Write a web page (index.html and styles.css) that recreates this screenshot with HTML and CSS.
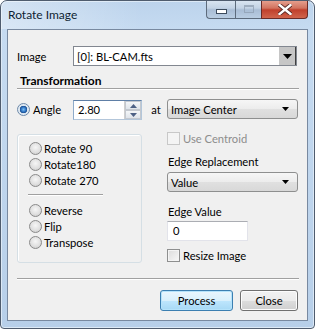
FILE: index.html
```html
<!DOCTYPE html>
<html lang="en">
  <head>
    <meta charset="utf-8">
    <title>Rotate Image</title>
    <link rel="stylesheet" href="styles.css">
  </head>
  <body>
    <div class="window">
      <div class="titlebar">
        <span class="title">Rotate Image</span>
        <div class="caption">
          <span class="cap cap-min"><span class="min-glyph"></span></span>
          <span class="cap cap-max"><span class="max-glyph"></span></span>
          <span class="cap cap-close">
            <svg width="14" height="11" viewBox="0 0 14 11">
              <path d="M1.5 1 L12.5 10 M12.5 1 L1.5 10" stroke="#5a2a26" stroke-width="4.2" stroke-linecap="square"/>
              <path d="M1.5 1 L12.5 10 M12.5 1 L1.5 10" stroke="#fff" stroke-width="2.4" stroke-linecap="square"/>
            </svg>
          </span>
        </div>
      </div>

      <div class="client">
        <div class="image-row">
          <span class="image-label">Image</span>
          <div class="edit-combo">
            <span class="edit-text">[0]: BL-CAM.fts</span>
            <span class="edit-drop">
              <svg width="9" height="5" viewBox="0 0 9 5"><polygon points="0,0 9,0 4.5,5" fill="#000"/></svg>
            </span>
          </div>
        </div>

        <div class="section-title">Transformation</div>

        <div class="transform">
          <div class="angle-row">
            <span class="radio checked"></span>
            <span class="angle-label">Angle</span>
            <div class="spin">
              <span class="spin-text">2.80</span>
              <span class="spin-btns">
                <span class="spin-btn">
                  <svg width="7" height="4" viewBox="0 0 7 4"><polygon points="0,4 7,4 3.5,0" fill="#4d6185"/></svg>
                </span>
                <span class="spin-btn">
                  <svg width="7" height="4" viewBox="0 0 7 4"><polygon points="0,0 7,0 3.5,4" fill="#4d6185"/></svg>
                </span>
              </span>
            </div>
          </div>
          <span class="at">at</span>
          <div class="combo">
            <span>Image Center</span>
            <svg width="7" height="4" viewBox="0 0 7 4"><polygon points="0,0 7,0 3.5,4" fill="#000"/></svg>
          </div>

          <div class="group">
            <div class="opt"><span class="radio"></span>Rotate 90</div>
            <div class="opt"><span class="radio"></span>Rotate180</div>
            <div class="opt"><span class="radio"></span>Rotate 270</div>
            <div class="group-sep"></div>
            <div class="opt"><span class="radio"></span>Reverse</div>
            <div class="opt"><span class="radio"></span>Flip</div>
            <div class="opt"><span class="radio"></span>Transpose</div>
          </div>

          <div class="right-col">
            <div class="check-row disabled"><span class="checkbox"></span>Use Centroid</div>
            <div class="field-label edge-rep">Edge Replacement</div>
            <div class="combo value-combo">
              <span>Value</span>
              <svg width="7" height="4" viewBox="0 0 7 4"><polygon points="0,0 7,0 3.5,4" fill="#000"/></svg>
            </div>
            <div class="field-label edge-val">Edge Value</div>
            <div class="textbox">0</div>
            <div class="check-row resize"><span class="checkbox"></span>Resize Image</div>
          </div>
        </div>

        <div class="bottom-sep"></div>

        <div class="buttons">
          <span class="btn btn-default">Process</span>
          <span class="btn btn-close">Close</span>
        </div>
      </div>
    </div>
  </body>
</html>
```

FILE: styles.css
```css
/* Win7 style dialog */

body {
  margin: 0;
  background-color: #ffffff;
  font-family: "Lato", "Noto Sans", sans-serif;
  font-size: 11.2px;
  color: #000000;
}

.window {
  width: 315px;
  height: 329px;
  box-sizing: border-box;
  border: 1px solid #4f5c6e;
  border-radius: 7px 7px 4px 4px;
  background: linear-gradient(to bottom, #bcd3ec 0px, #c6dbf1 30px, #b7cfe9 329px);
  box-shadow: inset 0 0 0 1px #dce9f6;
  overflow: hidden;
}

/* ----- title bar ----- */

.titlebar {
  height: 28px;
  display: flex;
  justify-content: space-between;
  background: linear-gradient(to right, rgba(255,255,255,0.35), rgba(255,255,255,0) 140px);
}

.title {
  padding: 6px 0 0 7px;
  font-size: 12px;
  color: #0f1f33;
}

.caption {
  display: flex;
  margin-right: 6px;
  height: 20px;
  margin-top: -1px;
}

.cap {
  display: flex;
  align-items: center;
  justify-content: center;
  height: 19px;
  box-sizing: border-box;
  border: 1px solid #5d6b7c;
  border-top: none;
}

.cap-min {
  width: 29px;
  border-radius: 0 0 0 4px;
  border-right: none;
  background: linear-gradient(to bottom, #dbe6f2 0%, #c3d3e5 45%, #a9bdd5 55%, #b9cde2 100%);
}

.cap-max {
  width: 26px;
  border-right: none;
  background: linear-gradient(to bottom, #dbe6f2 0%, #c3d3e5 45%, #a9bdd5 55%, #b9cde2 100%);
}

.cap-close {
  width: 47px;
  border-radius: 0 0 4px 0;
  border-color: #6a2b27;
  background: linear-gradient(to bottom, #e8a493 0%, #d1735f 45%, #c0402c 55%, #d0644c 100%);
}

.min-glyph {
  width: 9px;
  height: 3px;
  margin-top: 4px;
  background-color: #ffffff;
  border: 1px solid #3b4a5c;
}

.max-glyph {
  width: 8px;
  height: 6px;
  border: 1px solid #8c9cae;
  box-shadow: inset 0 1px 0 #8c9cae;
  opacity: 0.7;
}

/* ----- client area ----- */

.client {
  margin: 0 6px 0 6px;
  height: 292px;
  box-sizing: border-box;
  border: 1px solid #7889a0;
  background-color: #f0f0f0;
  padding: 0 8px 0 9px;
}

.image-row {
  display: flex;
  align-items: center;
  margin-top: 16px;
  height: 20px;
}

.image-label {
  width: 56px;
}

.edit-combo {
  display: flex;
  align-items: center;
  width: 224px;
  height: 20px;
  box-sizing: border-box;
  border: 1px solid #828790;
  background-color: #ffffff;
}

.edit-text {
  flex: 1;
  padding-left: 3px;
}

.edit-drop {
  display: flex;
  align-items: center;
  justify-content: center;
  width: 17px;
  height: 18px;
  background-color: #c6c6c6;
  border-right: 1px solid #404040;
  box-sizing: border-box;
}

.section-title {
  margin-top: 8px;
  height: 14px;
  line-height: 14px;
  padding-left: 3px;
  font-size: 12px;
  font-weight: bold;
  border-bottom: 1px solid #a0a0a0;
  box-shadow: 0 1px 0 #ffffff;
}

/* ----- transformation grid ----- */

.transform {
  display: grid;
  grid-template-columns: 125px 25px 131px;
  grid-template-rows: 21px auto;
  row-gap: 12px;
  margin-top: 10px;
}

.angle-row {
  display: flex;
  align-items: center;
}

.angle-label {
  width: 40px;
  margin-left: 3px;
}

.radio {
  display: inline-block;
  width: 13px;
  height: 13px;
  box-sizing: border-box;
  border-radius: 50%;
  border: 1px solid #8a8a8a;
  background: radial-gradient(circle at 50% 40%, #f6f6f6 0%, #e0e0e0 55%, #c6c6c6 100%);
}

.radio.checked {
  border-color: #6d89a9;
  background: radial-gradient(circle, #7bc0f4 0px, #2a6fbf 2.5px, #1d4f8f 3.5px, #d9e4ef 4px, #f4f8fb 100%);
}

.spin {
  display: flex;
  width: 69px;
  height: 20px;
  margin-top: 1px;
  box-sizing: border-box;
  border: 1px solid #b3c6da;
  border-top-color: #5f7fa6;
  border-left-color: #8fabca;
  background-color: #ffffff;
}

.spin-text {
  flex: 1;
  padding-left: 4px;
  line-height: 18px;
}

.spin-btns {
  display: flex;
  flex-direction: column;
  width: 16px;
  border-left: 1px solid #cfcfcf;
}

.spin-btn {
  flex: 1;
  display: flex;
  align-items: center;
  justify-content: center;
  border: 1px solid #c3c8cf;
  background: linear-gradient(to bottom, #f4f6f8, #dfe4ea);
}

.at {
  align-self: center;
  text-align: center;
  margin-left: 3px;
}

.combo {
  display: flex;
  align-items: center;
  justify-content: space-between;
  height: 20px;
  box-sizing: border-box;
  padding: 0 8px 0 3px;
  border: 1px solid #8e8f8f;
  border-radius: 3px;
  background: linear-gradient(to bottom, #f6f6f6 0%, #ececec 50%, #e0e0e0 51%, #d8d8d8 100%);
}

/* ----- left group ----- */

.group {
  grid-column: 1;
  margin-top: 2px;
  height: 129px;
  box-sizing: border-box;
  border: 1px solid #d5dfe5;
  border-radius: 3px;
  padding: 5px 0 0 11px;
  box-shadow: inset 1px 1px 0 #ffffff;
}

.opt {
  display: flex;
  align-items: center;
  gap: 2px;
  height: 16px;
}

.group-sep {
  width: 75px;
  height: 1px;
  margin: 6px 0 7px -1px;
  background-color: #a0a0a0;
  box-shadow: 0 1px 0 #ffffff;
}

/* ----- right column ----- */

.right-col {
  grid-column: 3;
  display: flex;
  flex-direction: column;
}

.check-row {
  display: flex;
  align-items: center;
  gap: 3px;
  height: 13px;
}

.checkbox {
  width: 13px;
  height: 13px;
  box-sizing: border-box;
  border: 1px solid #8e8f8f;
  background: linear-gradient(135deg, #dcdcdc, #f8f8f8);
  box-shadow: inset 0 0 0 1px #f4f4f4;
}

.check-row.disabled {
  color: #8d8d8d;
}

.check-row.disabled .checkbox {
  border-color: #c8c8c8;
  background: #f4f4f4;
}

.field-label {
  height: 15px;
  line-height: 15px;
  padding-left: 1px;
}

.edge-rep {
  margin-top: 9px;
}

.value-combo {
  margin-top: 3px;
}

.edge-val {
  margin-top: 12px;
}

.textbox {
  width: 81px;
  height: 20px;
  margin-top: 2px;
  box-sizing: border-box;
  padding-left: 5px;
  line-height: 18px;
  border: 1px solid #e2e3ea;
  border-top-color: #abadb3;
  background-color: #ffffff;
}

.resize {
  margin-top: 8px;
}

/* ----- footer ----- */

.bottom-sep {
  margin-top: 15px;
  height: 1px;
  background-color: #a0a0a0;
  box-shadow: 0 1px 0 #ffffff;
}

.buttons {
  display: flex;
  justify-content: flex-end;
  gap: 7px;
  margin-top: 11px;
  padding-right: 1px;
}

.btn {
  display: flex;
  align-items: center;
  justify-content: center;
  height: 21px;
  box-sizing: border-box;
  border-radius: 3px;
}

.btn-default {
  width: 73px;
  border: 1px solid #3c7fb1;
  background: linear-gradient(to bottom, #eaf6fd 0%, #d9f0fc 50%, #bee6fd 51%, #a7d9f5 100%);
  box-shadow: inset 0 0 0 1px #b5e3fb;
}

.btn-close {
  width: 58px;
  border: 1px solid #707070;
  background: linear-gradient(to bottom, #f2f2f2 0%, #ebebeb 50%, #dddddd 51%, #cfcfcf 100%);
  box-shadow: inset 0 0 0 1px #fcfcfc;
}
```
